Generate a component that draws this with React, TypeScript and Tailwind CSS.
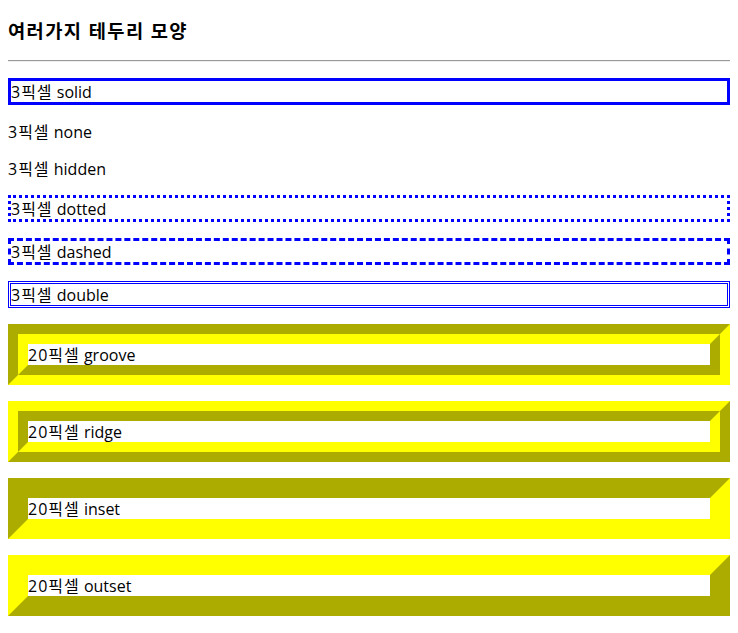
import React from "react";

const font = { fontFamily: '"Open Sans", "Noto Sans CJK KR", sans-serif' };

function Label({ ko, en }: { ko: string; en: string }) {
  return (
    <>
      <span className="tracking-[1px]">{ko}</span> {en}
    </>
  );
}

export default function App() {
  return (
    <div
      className="min-h-[633px] bg-white px-2 pt-px text-[16px] leading-[20px] text-black"
      style={font}
    >
      <h3 className="mt-[18px] mb-[18px] text-[18.72px] leading-[23px] font-bold tracking-[1.4px]">여러가지 테두리 모양</h3>
      <hr className="h-[2px] border-0 border-t border-t-[#9a9a9a] border-b border-b-[#eeeeee]" />
      <p className="mt-4 pt-px border-[3px] border-solid border-[#0000ff]"><Label ko="3픽셀" en="solid" /></p>
      <p className="mt-4 pt-px border-[3px] border-none border-[#0000ff]"><Label ko="3픽셀" en="none" /></p>
      <p className="mt-4 pt-px border-[3px] border-hidden border-[#0000ff]"><Label ko="3픽셀" en="hidden" /></p>
      <p className="mt-4 pt-px border-[3px] border-dotted border-[#0000ff]"><Label ko="3픽셀" en="dotted" /></p>
      <p className="mt-4 pt-px border-[3px] border-dashed border-[#0000ff]"><Label ko="3픽셀" en="dashed" /></p>
      <p className="mt-4 pt-px border-[3px] border-double border-[#0000ff]"><Label ko="3픽셀" en="double" /></p>
      <p className="mt-4 pt-px border-[20px] [border-style:groove] border-[#ffff00]"><Label ko="20픽셀" en="groove" /></p>
      <p className="mt-4 pt-px border-[20px] [border-style:ridge] border-[#ffff00]"><Label ko="20픽셀" en="ridge" /></p>
      <p className="mt-4 pt-px border-[20px] [border-style:inset] border-[#ffff00]"><Label ko="20픽셀" en="inset" /></p>
      <p className="mt-4 pt-px border-[20px] [border-style:outset] border-[#ffff00]"><Label ko="20픽셀" en="outset" /></p>
    </div>
  );
}
